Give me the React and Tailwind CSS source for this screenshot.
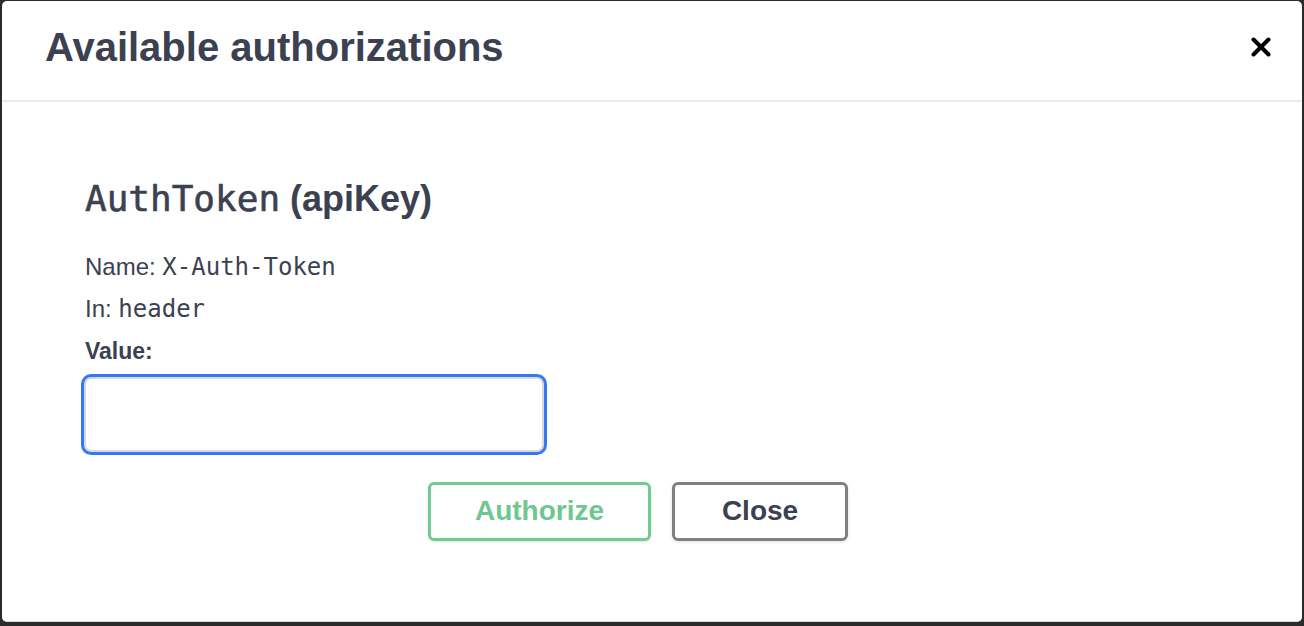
import React from 'react';

const sans = { fontFamily: '"Liberation Sans", Arial, sans-serif' };
const mono = { fontFamily: '"DejaVu Sans Mono", monospace' };

const CloseIcon = () => (
  <svg width="20" height="20" viewBox="0 0 20 20" fill="none" stroke="#000" strokeWidth="4" strokeLinecap="round">
    <path d="M2.5 2.5 L17.5 17.5" />
    <path d="M17.5 2.5 L2.5 17.5" />
  </svg>
);

const App = () => {
  return (
    <div className="w-[1304px] h-[626px] bg-[#2b2b2b] pl-[2px] pt-[1px] overflow-hidden" style={sans}>
      <div className="w-[1300px] h-[621px] bg-white rounded-[5px] border-b border-[#dcdcdc] text-[#3b4151]">
        {/* Header */}
        <div className="flex items-center justify-between pt-[26px] pb-[33px] pl-[43px] pr-[31px] border-b-2 border-[#ebebeb]">
          <h2 className="text-[40px] leading-[40px] font-bold">Available authorizations</h2>
          <button type="button" className="w-5 h-5 flex items-center justify-center">
            <CloseIcon />
          </button>
        </div>

        {/* Body */}
        <div className="pl-[83px]">
          <h4 className="mt-[79px] text-[36px] leading-[36px] font-bold whitespace-nowrap">
            <span className="font-normal [-webkit-text-stroke:0.6px_#3b4151]" style={mono}>AuthToken</span> (apiKey)
          </h4>
          <p className="mt-[29px] text-[24px] leading-[42px]">
            Name: <span style={mono}>X-Auth-Token</span>
          </p>
          <p className="text-[24px] leading-[42px]">
            In: <span style={mono}>header</span>
          </p>
          <label className="block text-[23px] leading-[42px] font-bold">Value:</label>
          <input
            type="text"
            className="mt-[5px] -ml-[1px] block w-[460px] h-[75px] rounded-[7px] border-2 border-[#d9d9d9] bg-white outline-none shadow-[0_0_0_3px_#3478f6]"
          />

          <div className="mt-[30px] flex justify-start gap-[21px] pl-[343px]">
            <button
              type="button"
              className="w-[223px] h-[59px] pb-[2px] rounded-[6px] border-[3px] border-[#72ca93] text-[#6ec790] text-[28px] font-bold shadow-[0_1px_3px_rgba(0,0,0,0.12)]"
            >
              Authorize
            </button>
            <button
              type="button"
              className="w-[176px] h-[59px] pb-[2px] rounded-[6px] border-[3px] border-[#808080] text-[#3b4151] text-[28px] font-bold shadow-[0_1px_3px_rgba(0,0,0,0.12)]"
            >
              Close
            </button>
          </div>
        </div>
      </div>
    </div>
  );
};

export default App;
